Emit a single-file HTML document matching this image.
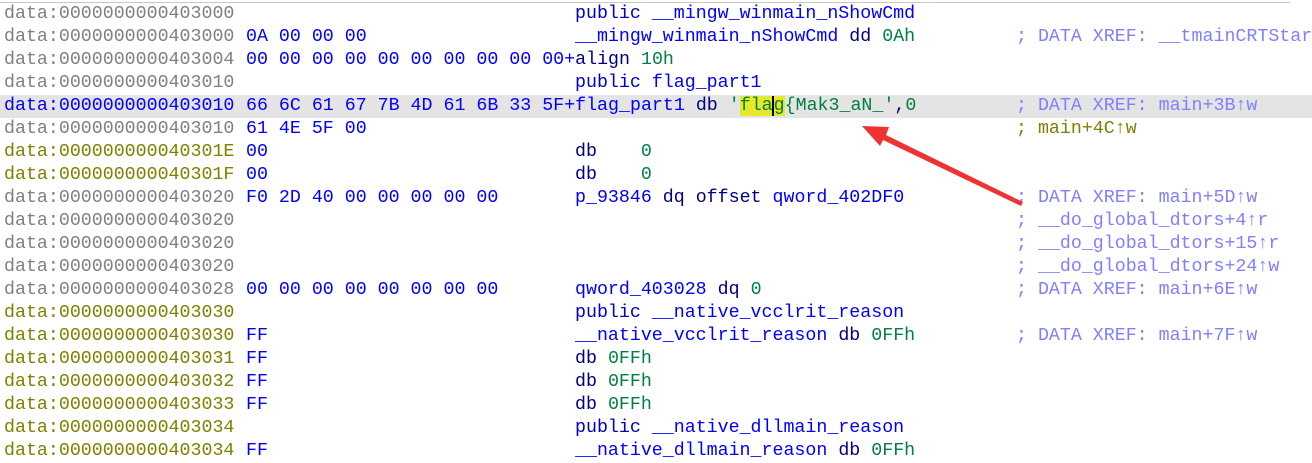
<!DOCTYPE html>
<html><head><meta charset="utf-8"><style>
html,body{margin:0;padding:0;background:#fff;width:1312px;height:463px;overflow:hidden;position:relative}
.l{position:absolute;left:0;height:23px;line-height:23px;font-family:"Liberation Mono",monospace;font-size:18.3px;white-space:pre;width:1312px}
.l span.a{position:absolute;left:4px}
.l span.h{position:absolute;left:246px}
.l span.i{position:absolute;left:575px}
.l span.m{position:absolute;left:1016px}
.g{color:#808080}.o{color:#808000}.b{color:#0000ff}.n{color:#000080}.k{color:#0000c0}.num{color:#008040}.c{color:#8080ff}
.hl{background:#e4e4e4}
.y{background:#e8e82a}
#top{position:absolute;left:0;top:2px;width:1290px;height:1px;background:#c8c8c8}
</style></head><body>
<div id="top"></div>
<div class="l" style="top:2.5px"><span class="a g">data:0000000000403000</span><span class="i"><span class="k">public</span> <span class="b">__mingw_winmain_nShowCmd</span></span></div>
<div class="l" style="top:25.5px"><span class="a g">data:0000000000403000</span><span class="h b">0A 00 00 00</span><span class="i"><span class="b">__mingw_winmain_nShowCmd</span> <span class="n">dd</span> <span class="num">0Ah</span></span><span class="m c">; DATA XREF: __tmainCRTStar</span></div>
<div class="l" style="top:48.5px"><span class="a g">data:0000000000403004</span><span class="h"><span class="b">00 00 00 00 00 00 00 00 00 00+</span><span class="n">align</span> <span class="num">10h</span></span></div>
<div class="l" style="top:71.5px"><span class="a g">data:0000000000403010</span><span class="i"><span class="k">public</span> <span class="b">flag_part1</span></span></div>
<div class="l hl" style="top:94.5px"><span class="a b">data:0000000000403010</span><span class="h"><span class="b">66 6C 61 67 7B 4D 61 6B 33 5F+flag_part1</span> <span class="n">db</span> <span class="num">'<span class="y">fla<span style="border-left:2px solid #000;margin-left:-1px">g</span></span>{Mak3_aN_'</span><span class="n">,</span><span class="num">0</span></span><span class="m c">; DATA XREF: main+3B↑w</span></div>
<div class="l" style="top:117.5px"><span class="a g">data:0000000000403010</span><span class="h b">61 4E 5F 00</span><span class="m o">; main+4C↑w</span></div>
<div class="l" style="top:140.5px"><span class="a o">data:000000000040301E</span><span class="h b">00</span><span class="i"><span class="n">db</span>    <span class="num">0</span></span></div>
<div class="l" style="top:163.5px"><span class="a o">data:000000000040301F</span><span class="h b">00</span><span class="i"><span class="n">db</span>    <span class="num">0</span></span></div>
<div class="l" style="top:186.5px"><span class="a g">data:0000000000403020</span><span class="h b">F0 2D 40 00 00 00 00 00</span><span class="i"><span class="b">p_93846</span> <span class="n">dq offset</span> <span class="b">qword_402DF0</span></span><span class="m c">; DATA XREF: main+5D↑w</span></div>
<div class="l" style="top:209.5px"><span class="a g">data:0000000000403020</span><span class="m c">; __do_global_dtors+4↑r</span></div>
<div class="l" style="top:232.5px"><span class="a g">data:0000000000403020</span><span class="m c">; __do_global_dtors+15↑r</span></div>
<div class="l" style="top:255.5px"><span class="a g">data:0000000000403020</span><span class="m c">; __do_global_dtors+24↑w</span></div>
<div class="l" style="top:278.5px"><span class="a g">data:0000000000403028</span><span class="h b">00 00 00 00 00 00 00 00</span><span class="i"><span class="b">qword_403028</span> <span class="n">dq</span> <span class="num">0</span></span><span class="m c">; DATA XREF: main+6E↑w</span></div>
<div class="l" style="top:301.5px"><span class="a o">data:0000000000403030</span><span class="i"><span class="k">public</span> <span class="b">__native_vcclrit_reason</span></span></div>
<div class="l" style="top:324.5px"><span class="a o">data:0000000000403030</span><span class="h b">FF</span><span class="i"><span class="b">__native_vcclrit_reason</span> <span class="n">db</span> <span class="num">0FFh</span></span><span class="m c">; DATA XREF: main+7F↑w</span></div>
<div class="l" style="top:347.5px"><span class="a o">data:0000000000403031</span><span class="h b">FF</span><span class="i"><span class="n">db</span> <span class="num">0FFh</span></span></div>
<div class="l" style="top:370.5px"><span class="a o">data:0000000000403032</span><span class="h b">FF</span><span class="i"><span class="n">db</span> <span class="num">0FFh</span></span></div>
<div class="l" style="top:393.5px"><span class="a o">data:0000000000403033</span><span class="h b">FF</span><span class="i"><span class="n">db</span> <span class="num">0FFh</span></span></div>
<div class="l" style="top:416.5px"><span class="a o">data:0000000000403034</span><span class="i"><span class="k">public</span> <span class="b">__native_dllmain_reason</span></span></div>
<div class="l" style="top:439.5px"><span class="a o">data:0000000000403034</span><span class="h b">FF</span><span class="i"><span class="b">__native_dllmain_reason</span> <span class="n">db</span> <span class="num">0FFh</span></span></div>
<svg style="position:absolute;left:0;top:0" width="1312" height="463">
<polygon points="1021,206 1023,202 886,135 889,127 862,126 880,146 883,140" fill="#ee3333"/>
</svg>
</body></html>
